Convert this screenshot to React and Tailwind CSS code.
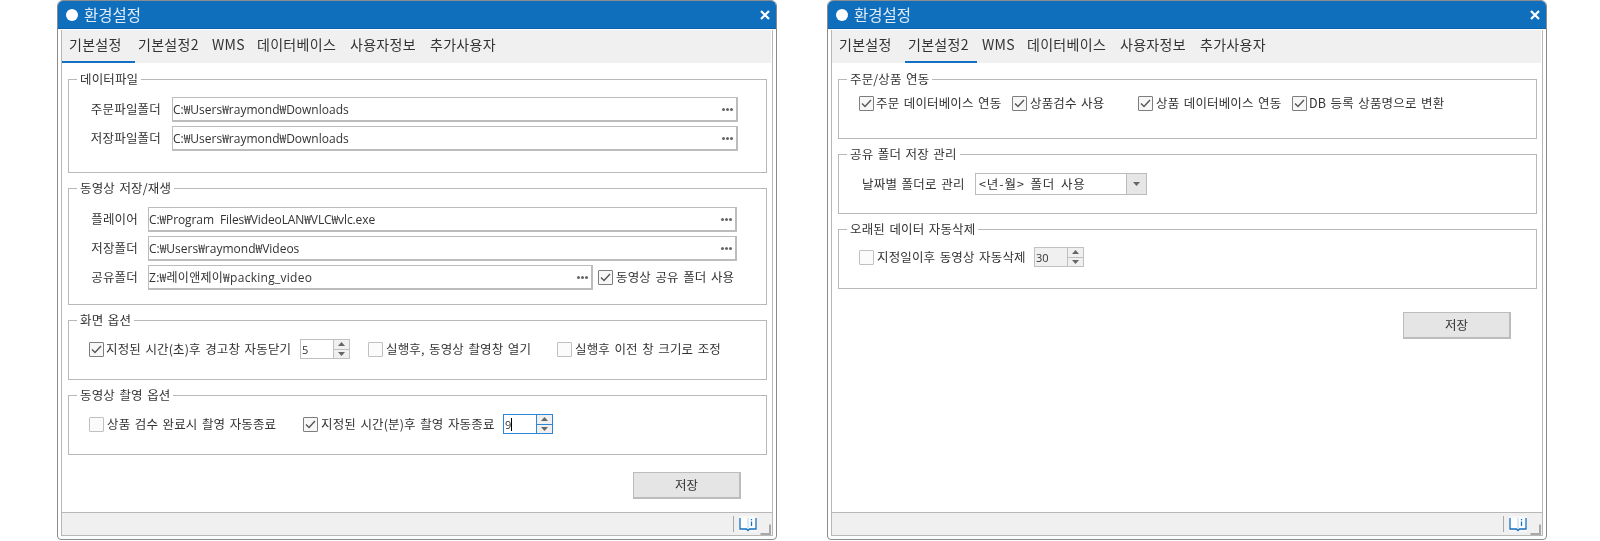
import React from "react";

const FONT = "[font-family:'Noto_Sans_CJK_KR','Noto_Sans',sans-serif]";
const LATIN = "[font-family:'Open_Sans','Noto_Sans_CJK_KR',sans-serif]";

function Tri({ dir = "up", className = "" }) {
  return (
    <svg width="7" height="4" viewBox="0 0 7 4" className={className}>
      {dir === "up" ? <path d="M3.5 0 L7 4 L0 4 Z" fill="#666" /> : <path d="M0 0 L7 0 L3.5 4 Z" fill="#666" />}
    </svg>
  );
}

function Dots() {
  return (
    <div className="flex gap-px">
      <span className="w-[3px] h-[3px] bg-[#666] rounded-full" />
      <span className="w-[3px] h-[3px] bg-[#666] rounded-full" />
      <span className="w-[3px] h-[3px] bg-[#666] rounded-full" />
    </div>
  );
}

function PathField({ value, width, height = "h-[25px]", track = "" }) {
  return (
    <div className={`${width} ${height} shrink-0 flex items-center justify-between border border-[#bcbcbc] bg-white pr-[3px] border-b-2 border-r-2`}>
      <span className={`${LATIN} pt-[1px] text-[12px] text-[#333] whitespace-pre leading-none [word-spacing:3px] ${track}`}>{value}</span>
      <Dots />
    </div>
  );
}

function Check({ checked, label, className = "", gap = "ml-[3px]" }) {
  return (
    <div className={`flex items-center shrink-0 ${className}`}>
      <div className={`w-[15px] h-[15px] shrink-0 rounded-[1px] border flex items-center justify-center ${checked ? "border-[#7d7d7d] bg-[#f7f7f7]" : "border-[#c0c0c0] bg-[#fbfbfb]"}`}>
        {checked && (
          <svg width="11" height="9" viewBox="0 0 11 9">
            <path d="M1 4.5 L4 7.5 L10 1" fill="none" stroke="#555" strokeWidth="1.4" />
          </svg>
        )}
      </div>
      <span className={`${gap} text-[12.5px] text-[#333] whitespace-pre leading-none tracking-[0.15px] [word-spacing:1.5px]`}>{label}</span>
    </div>
  );
}

function Spin({ value, focused, disabled, className = "" }) {
  const border = focused ? "border-[#2f86d4]" : "border-[#c0c0c0]";
  return (
    <div className={`w-[50px] h-[20px] shrink-0 flex border ${border} ${disabled ? "bg-[#f0f0f0]" : "bg-white"} ${className}`}>
      <div className={`${LATIN} flex-1 flex items-center pl-[1px] text-[11px] text-[#333] leading-none`}>
        {value}
        {focused && <span className="w-px h-[13px] bg-black" />}
      </div>
      <div className={`w-[16px] flex flex-col border-l ${border}`}>
        <div className={`flex-1 flex items-center justify-center bg-[#f0f0f0] border-b ${border}`}><Tri dir="up" /></div>
        <div className="flex-1 flex items-center justify-center bg-[#f0f0f0]"><Tri dir="down" /></div>
      </div>
    </div>
  );
}

function Group({ title, className = "", children }) {
  return (
    <fieldset className={`w-[699px] border border-[#b8b8b8] min-w-0 ${className}`}>
      <legend className="ml-[8px] px-[3px] h-[16px] text-[12.5px] leading-[16px] text-[#333] whitespace-pre tracking-[0.15px] [word-spacing:1.5px]">{title}</legend>
      {children}
    </fieldset>
  );
}

function Label({ children, className = "" }) {
  return <div className={`shrink-0 text-right text-[12.5px] text-[#333] whitespace-pre leading-none tracking-[0.2px] [word-spacing:1.5px] ${className}`}>{children}</div>;
}

const TABS = [
  { t: "기본설정", w: "w-[73px]", pl: "pl-[7px]" },
  { t: "기본설정2", w: "w-[72px]", pl: "pl-[3px]" },
  { t: "WMS", w: "w-[45px]", pl: "pl-[5px]" },
  { t: "데이터베이스", w: "w-[93px]", pl: "pl-[5px]" },
  { t: "사용자정보", w: "w-[79px]", pl: "pl-[5px]" },
  { t: "추가사용자", w: "w-[80px]", pl: "pl-[6px]" },
];

function Dialog({ active, children, className = "" }) {
  return (
    <div className={`w-[720px] h-[540px] shrink-0 flex flex-col border border-[#8c8c8c] rounded-t-[6px] rounded-b-[4px] bg-white overflow-hidden ${className}`}>
      <div className="h-[28px] shrink-0 bg-[#0f6fbd] border-b border-[#0b62ab] flex items-center pl-[8px] pr-[6px]">
        <span className="w-[12px] h-[12px] rounded-full bg-white" />
        <span className="ml-[6px] text-[15.5px] leading-none text-[#dfecf7]">환경설정</span>
        <svg width="10" height="10" viewBox="0 0 10 10" className="ml-auto">
          <path d="M1 1 L9 9 M9 1 L1 9" stroke="#fff" strokeWidth="2.2" />
        </svg>
      </div>
      <div className="flex-1 min-h-0 mx-[3px] mb-[3px] mt-[1px] border-x border-b border-[#b8b8b8] flex flex-col">
        <div className="h-[33px] shrink-0 bg-[#f0f0f0] flex mr-[1px]">
          {TABS.map((tab, i) => (
            <div
              key={tab.t}
              className={`${tab.w} ${tab.pl} h-full flex items-center pb-[3px] text-[14px] leading-none text-[#333] tracking-[0.3px] whitespace-pre border-b-2 ${active === i ? "border-[#1470c0]" : "border-transparent"}`}
            >
              {tab.t}
            </div>
          ))}
        </div>
        <div className="flex-1 min-h-0 flex flex-col pl-[6px]">{children}</div>
        <div className="h-[23px] shrink-0 bg-[#f0f0f0] border-t border-[#b8b8b8] flex items-center justify-end">
          <span className="w-px h-[16px] bg-[#aaa] mr-[5px]" />
          <svg width="18" height="16" viewBox="0 0 18 16" className="mr-[3px]">
            <rect width="18" height="16" fill="#f7f7f7" />
            <path d="M1 2 V13 H7.5 L9 14.5 L10.5 13 H17 V2" fill="#fff" stroke="#1470c0" strokeWidth="1.3" />
            <path d="M9 2 V13" stroke="#bcd4ea" strokeWidth="1" />
            <path d="M12.5 3 V4.2 M12.5 5.5 V10" stroke="#1470c0" strokeWidth="1.3" />
          </svg>
          <svg width="11" height="11" viewBox="0 0 11 11" className="self-end mr-[1px]">
            <path d="M0.5 10 H10 V0.5" fill="none" stroke="#a8a8a8" strokeWidth="2" />
          </svg>
        </div>
      </div>
    </div>
  );
}

function SaveButton({ className = "" }) {
  return (
    <div className={`w-[108px] h-[27px] self-end mr-[31px] shrink-0 bg-[#e5e5e5] border border-[#bcbcbc] border-b-2 border-r-2 flex items-center justify-center text-[12.5px] text-[#333] leading-none ${className}`}>
      저장
    </div>
  );
}

export default function App() {
  return (
    <div className={`w-[1600px] h-[541px] bg-white flex pl-[57px] gap-[50px] overflow-hidden blur-[0.3px] ${FONT}`}>
      <Dialog active={0}>
        <Group title="데이터파일" className="mt-[8px] h-[102px]">
          <div className="pt-[10px] flex flex-col gap-[4px]">
            <div className="flex items-center">
              <Label className="w-[92px]">주문파일폴더</Label>
              <div className="w-[11px]" />
              <PathField width="w-[566px]" value="C:₩Users₩raymond₩Downloads" />
            </div>
            <div className="flex items-center">
              <Label className="w-[92px]">저장파일폴더</Label>
              <div className="w-[11px]" />
              <PathField width="w-[566px]" value="C:₩Users₩raymond₩Downloads" />
            </div>
          </div>
        </Group>
        <Group title="동영상 저장/재생" className="mt-[7px] h-[125px]">
          <div className="pt-[11px] flex flex-col gap-[4px]">
            <div className="flex items-center">
              <Label className="w-[69px]">플레이어</Label>
              <div className="w-[10px]" />
              <PathField width="w-[589px]" track="tracking-[-0.1px]" value="C:₩Program Files₩VideoLAN₩VLC₩vlc.exe" />
            </div>
            <div className="flex items-center">
              <Label className="w-[69px]">저장폴더</Label>
              <div className="w-[10px]" />
              <PathField width="w-[589px]" value="C:₩Users₩raymond₩Videos" />
            </div>
            <div className="flex items-center">
              <Label className="w-[69px]">공유폴더</Label>
              <div className="w-[10px]" />
              <PathField width="w-[445px]" track="tracking-[0.28px]" value="Z:₩레이앤제이₩packing_video" />
              <Check checked label="동영상 공유 폴더 사용" className="ml-[5px]" />
            </div>
          </div>
        </Group>
        <Group title="화면 옵션" className="mt-[7px] h-[68px]">
          <div className="pt-[11px] pl-[20px] flex items-center">
            <Check checked label="지정된 시간(초)후 경고창 자동닫기" gap="ml-[2px]" className="w-[211px]" />
            <Spin value="5" />
            <Check label="실행후, 동영상 촬영창 열기" className="ml-[18px] w-[189px]" />
            <Check label="실행후 이전 창 크기로 조정" />
          </div>
        </Group>
        <Group title="동영상 촬영 옵션" className="mt-[7px] h-[68px]">
          <div className="pt-[11px] pl-[20px] flex items-center">
            <Check label="상품 검수 완료시 촬영 자동종료" gap="ml-[3px]" className="w-[214px]" />
            <Check checked label="지정된 시간(분)후 촬영 자동종료" className="w-[200px]" />
            <Spin value="9" focused />
          </div>
        </Group>
        <SaveButton className="mt-[17px]" />
      </Dialog>

      <Dialog active={1}>
        <Group title="주문/상품 연동" className="mt-[8px] h-[68px]">
          <div className="pt-[9px] pl-[20px] flex items-center">
            <Check checked label="주문 데이터베이스 연동" gap="ml-[2px]" className="w-[153px]" />
            <Check checked label="상품검수 사용" className="w-[126px]" />
            <Check checked label="상품 데이터베이스 연동" className="w-[154px]" />
            <Check checked label="DB 등록 상품명으로 변환" gap="ml-[2px]" />
          </div>
        </Group>
        <Group title="공유 폴더 저장 관리" className="mt-[7px] h-[68px]">
          <div className="pt-[11px] pl-[23px] flex items-center">
            <Label className="w-[113px] !text-left">날짜별 폴더로 관리</Label>
            <div className="w-[172px] h-[22px] shrink-0 flex border border-[#bcbcbc] bg-white">
              <div className="flex-1 flex items-center pl-[3px] text-[12.5px] text-[#333] leading-none whitespace-pre tracking-[0.9px] [word-spacing:2px]">{"<년-월> 폴더 사용"}</div>
              <div className="w-[20px] bg-[#e6e6e6] border-l border-[#bcbcbc] flex items-center justify-center"><Tri dir="down" /></div>
            </div>
          </div>
        </Group>
        <Group title="오래된 데이터 자동삭제" className="mt-[7px] h-[68px]">
          <div className="pt-[10px] pl-[20px] flex items-center">
            <Check label="지정일이후 동영상 자동삭제" className="w-[175px]" />
            <Spin value="30" disabled />
          </div>
        </Group>
        <SaveButton className="mt-[23px]" />
      </Dialog>
    </div>
  );
}
